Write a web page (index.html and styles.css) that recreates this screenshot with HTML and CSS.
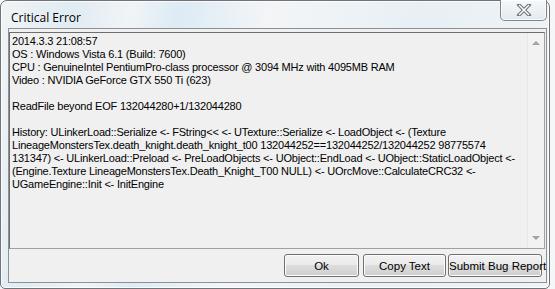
FILE: index.html
```html
<!DOCTYPE html>
<html lang="en">
<head>
  <meta charset="UTF-8" />
  <title>Critical Error</title>
  <link rel="stylesheet" href="styles.css">
</head>
<body>

  <div class="window">
    <div class="titlebar">
      <span class="title">Critical Error</span>
      <div class="close">
        <svg width="16" height="12" viewBox="0 0 16 12">
          <path d="M3 1 L13 11 M13 1 L3 11" stroke="#6a6f76" stroke-width="3.5" stroke-linecap="square" fill="none"/>
          <path d="M3 1 L13 11 M13 1 L3 11" stroke="#ffffff" stroke-width="1.5" fill="none"/>
        </svg>
      </div>
    </div>

    <div class="client">
      <div class="log">
        <div class="log-text">
          2014.3.3 21:08:57<br>
          OS : Windows Vista 6.1 (Build: 7600)<br>
          CPU : GenuineIntel PentiumPro-class processor @ 3094 MHz with 4095MB RAM<br>
          Video : NVIDIA GeForce GTX 550 Ti (623)<br>
          <br>
          ReadFile beyond EOF 132044280+1/132044280<br>
          <br>
          History: ULinkerLoad::Serialize &lt;- FString&lt;&lt; &lt;- UTexture::Serialize &lt;- LoadObject &lt;- (Texture<br>
          LineageMonstersTex.death_knight.death_knight_t00 132044252==132044252/132044252 98775574<br>
          131347) &lt;- ULinkerLoad::Preload &lt;- PreLoadObjects &lt;- UObject::EndLoad &lt;- UObject::StaticLoadObject &lt;-<br>
          (Engine.Texture LineageMonstersTex.Death_Knight_T00 NULL) &lt;- UOrcMove::CalculateCRC32 &lt;-<br>
          UGameEngine::Init &lt;- InitEngine
        </div>
        <div class="scrollbar">
          <span class="arrow up"></span>
          <span class="arrow down"></span>
        </div>
      </div>

      <div class="buttons">
        <button class="btn btn-ok">Ok</button>
        <button class="btn btn-copy">Copy Text</button>
        <button class="btn btn-submit">Submit Bug Report</button>
      </div>
    </div>
  </div>

</body>
</html>
```

FILE: styles.css
```css
* { margin: 0; padding: 0; box-sizing: border-box; }
html, body {
  width: 555px;
  height: 289px;
  overflow: hidden;
  background: #f4f6f8;
  font-family: "Liberation Sans", Arial, sans-serif;
  color: #000;
}

.window {
  width: 550px;
  height: 289px;
  display: flex;
  flex-direction: column;
  border: 1px solid #707478;
  border-radius: 7px 7px 5px 5px;
  background: linear-gradient(100deg, #f1f4f6 0%, #e0ebf3 12%, #f1f4f6 22%, #dcebf5 30%, #f3f5f7 45%, #e8f0f5 70%, #f1f3f5 100%);
  box-shadow: inset 0 0 0 1px rgba(255,255,255,0.8);
  padding: 0 2px 5px 7px;
}

.titlebar {
  height: 27px;
  display: flex;
  justify-content: space-between;
  align-items: flex-start;
}

.title {
  font-family: "Open Sans", "Noto Sans", sans-serif;
  font-size: 12px;
  padding: 8px 0 0 3px;
  color: #000;
}

.close {
  width: 47px;
  height: 21px;
  margin-top: -1px;
  border: 1px solid #7f858c;
  border-top: none;
  border-radius: 0 0 5px 5px;
  background: linear-gradient(#f6f8fa, #e3e9ee);
  box-shadow: inset 0 0 0 1px rgba(255,255,255,0.7);
  display: flex;
  justify-content: center;
  align-items: center;
}

.client {
  flex: 1;
  background: #f0f0f0;
  border: 1px solid #8c9196;
  display: flex;
  flex-direction: column;
  padding: 3px 1px 0 0;
}

.log {
  height: 217px;
  display: flex;
  border: 1px solid #6e6e6e;
  border-right-color: #a0a0a0;
  border-bottom-color: #a0a0a0;
  background: #f0f0f0;
}

.log-text {
  flex: 1;
  padding: 2px 0 0 2px;
  font-size: 11px;
  letter-spacing: -0.2px;
  line-height: 13px;
  white-space: nowrap;
  overflow: hidden;
}

.scrollbar {
  width: 17px;
  border-left: 1px solid #e6e6e6;
  background: #f2f2f2;
  display: flex;
  flex-direction: column;
  justify-content: space-between;
  align-items: center;
  padding: 8px 0 8px;
}

.arrow {
  width: 0;
  height: 0;
  border-left: 4px solid transparent;
  border-right: 4px solid transparent;
}
.arrow.up { border-bottom: 4px solid #a3a3a3; }
.arrow.down { border-top: 4px solid #a3a3a3; }

.buttons {
  display: flex;
  justify-content: flex-end;
  gap: 2px;
  padding: 5px 3px 0 0;
}

.btn {
  height: 23px;
  font-family: "Liberation Sans", Arial, sans-serif;
  font-size: 11.5px;
  white-space: nowrap;
  color: #000;
  border: 1px solid #707070;
  border-radius: 3px;
  background: linear-gradient(#f2f2f2 0%, #ebebeb 45%, #dddddd 50%, #cfcfcf 100%);
  box-shadow: inset 0 0 0 1px #fcfcfc;
}
.btn-ok { width: 75px; margin-right: 2px; }
.btn-copy { width: 83px; }
.btn-submit { width: 94px; }
```
